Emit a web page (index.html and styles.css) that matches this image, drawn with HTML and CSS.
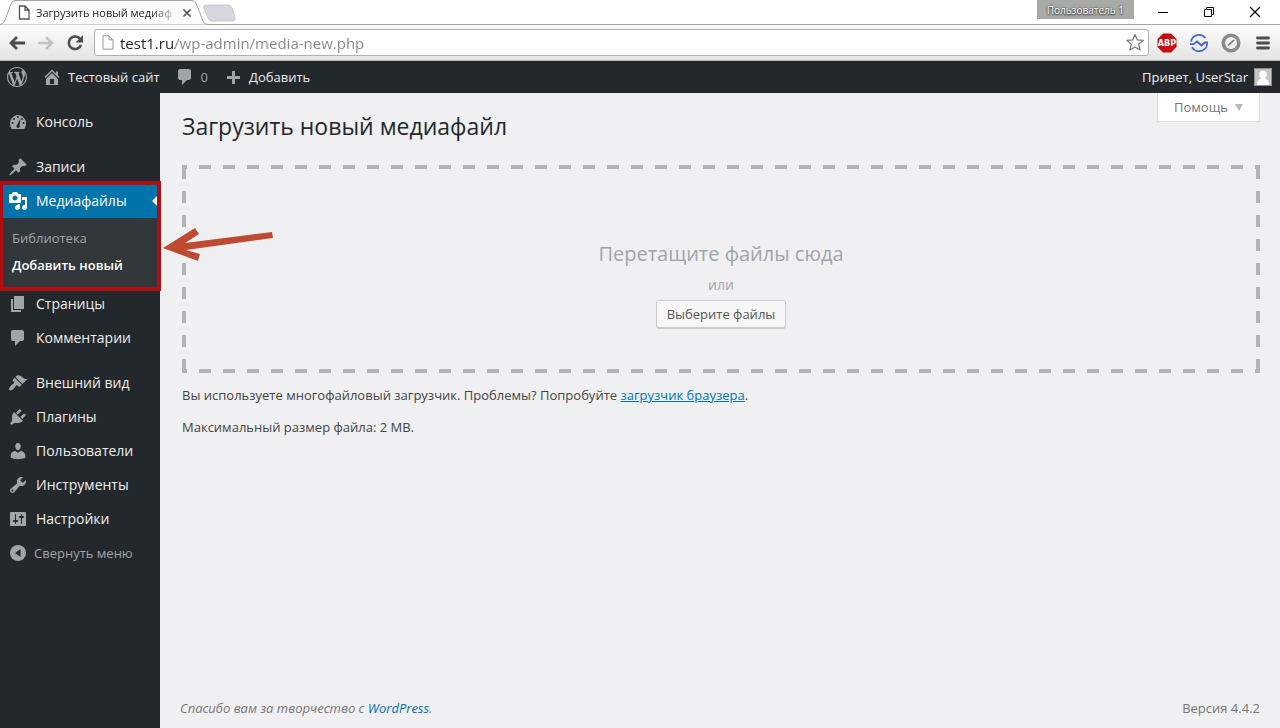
FILE: index.html
```html
<!DOCTYPE html>
<html lang="ru">
<head>
<meta charset="utf-8">
<title>Загрузить новый медиафайл</title>
<link rel="stylesheet" href="styles.css">
</head>
<body>
<div class="window">
  <header class="browser">
    <div class="tabstrip">
      <div class="tab">
        <svg class="tab-shape" width="250" height="25" viewBox="0 0 250 25"><path d="M0 24.500C3 24 4 22 5 20L11 4Q12 .5 15 .5H192Q195 .5 196 3L203 21Q204 24.500 208 24.500" fill="#fcfcfc" stroke="#a5a5a5"/><path d="M205 5h23q3 0 4 3l3 9q1 4-2 4h-21q-3 0-4-3l-4-10q-1-3 1-3z" fill="#d5d8de" stroke="#c6c8cc"/></svg>
        <svg class="page-icon" width="12" height="15" viewBox="0 0 12 15"><path d="M1.500 1h5.500l4 4v9h-9.500zM7 1v4h4" fill="#fff" stroke="#555" stroke-width="1.300"/></svg>
        <span class="tab-title">Загрузить новый медиаф</span>
        <button class="tab-close" aria-label="Закрыть вкладку"><svg width="10" height="10" viewBox="0 0 10 10"><path d="M1.500 1.500l7 7M8.500 1.500l-7 7" stroke="#505050" stroke-width="1.600"/></svg></button>
      </div>
      <div class="window-tools">
        <button class="profile">Пользователь 1</button>
        <button class="win" aria-label="Свернуть"><svg width="12" height="12" viewBox="0 0 12 12"><path d="M1 6.500h10" stroke="#000"/></svg></button>
        <button class="win" aria-label="Развернуть"><svg width="12" height="12" viewBox="0 0 12 12"><path d="M1.500 3.500h7v7h-7zM3.500 3V1.500h7v7H9" fill="none" stroke="#000"/></svg></button>
        <button class="win" aria-label="Закрыть"><svg width="12" height="12" viewBox="0 0 12 12"><path d="M1 1l10 10M11 1L1 11" stroke="#000" stroke-width="1.200"/></svg></button>
      </div>
    </div>
    <div class="toolbar">
      <button class="nav" aria-label="Назад"><svg width="18" height="16" viewBox="0 0 18 16"><path d="M17 8H4M9 2L3 8l6 6" fill="none" stroke="#4d4d4d" stroke-width="2.800"/></svg></button>
      <button class="nav" aria-label="Вперёд"><svg width="18" height="16" viewBox="0 0 18 16"><path d="M1 8h13M9 2l6 6-6 6" fill="none" stroke="#c4c4c4" stroke-width="2.600"/></svg></button>
      <button class="nav" aria-label="Обновить"><svg width="18" height="18" viewBox="0 0 18 18"><path d="M14.200 5A6.300 6.300 0 1 0 15 11" fill="none" stroke="#4d4d4d" stroke-width="2.600"/><path d="M17 1v7.500h-7.500z" fill="#4d4d4d"/></svg></button>
      <div class="omnibox">
        <svg width="12" height="15" viewBox="0 0 12 15"><path d="M1 .8h6l4 4v9.400H1zM7 .8v4h4" fill="#fbfbfb" stroke="#999"/></svg>
        <input class="url" type="text" aria-label="Адрес" value="test1.ru/wp-admin/media-new.php">
        <button class="star" aria-label="Добавить в закладки"><svg width="20" height="19" viewBox="0 0 20 19"><path d="M10 1.500l2.300 5.400 5.900.5-4.500 3.900 1.400 5.700L10 14l-5.100 3 1.400-5.700L1.800 7.400l5.900-.5z" fill="#fff" stroke="#777" stroke-width="1.200" stroke-linejoin="round"/></svg></button>
      </div>
      <div class="extensions">
        <button class="nav" aria-label="Adblock Plus"><svg width="20" height="20" viewBox="0 0 20 20"><path d="M6 .5h8L19.500 6v8L14 19.500H6L.5 14V6z" fill="#c70d12"/><text class="abp" x="10" y="13" text-anchor="middle">ABP</text></svg></button>
        <button class="nav" aria-label="Расширение"><svg width="20" height="20" viewBox="0 0 20 20" fill="none" stroke="#4467c9" stroke-width="1.800"><path d="M2 8.500A8.200 8.200 0 0 1 16.500 5M3 14.200A8.200 8.200 0 0 0 18.200 9.500"/><path d="M1 11.200h3.500L8 8.500l4.500 4 3.500-3h3"/></svg></button>
        <button class="nav" aria-label="Компас"><svg width="20" height="20" viewBox="0 0 20 20"><circle cx="10" cy="10" r="9.500" fill="#8a8a8a"/><circle cx="10" cy="10" r="6" fill="#f1f1f1"/><path d="M6.500 13.500l1-2.500 5-4.500L14 7l-4.500 4.500z" fill="#777"/></svg></button>
        <button class="nav" aria-label="Меню браузера"><svg width="14" height="14" viewBox="0 0 14 14"><path d="M1.500 2h11M1.500 7h11M1.500 12h11" stroke="#4d4d4d" stroke-width="2.800" stroke-linecap="round"/></svg></button>
      </div>
    </div>
  </header>

  <nav class="adminbar" aria-label="Панель">
    <a href="#" aria-label="О WordPress"><svg class="ico" viewBox="0 0 20 20"><path d="M20 10c0-5.510-4.490-10-10-10C4.480 0 0 4.490 0 10c0 5.520 4.480 10 10 10 5.510 0 10-4.480 10-10zM7.780 15.370L4.370 6.220c.55-.02 1.170-.08 1.170-.08.5-.06.44-1.130-.06-1.110 0 0-1.450.11-2.370.11-.18 0-.37 0-.58-.01C4.120 2.690 6.870 1.110 10 1.110c2.330 0 4.450.87 6.050 2.340-.68-.11-1.650.39-1.650 1.580 0 .74.45 1.360.9 2.100.35.61.55 1.360.55 2.460 0 1.490-1.400 5-1.400 5l-3.030-8.370c.54-.02.82-.17.82-.17.5-.05.44-1.250-.06-1.220 0 0-1.440.12-2.380.12-.87 0-2.330-.12-2.330-.12-.5-.03-.56 1.200-.06 1.220l.92.08 1.260 3.410zM17.410 10c.24-.64.74-1.870.43-4.250.7 1.290 1.050 2.710 1.050 4.250 0 3.290-1.730 6.240-4.400 7.780.97-2.590 1.940-5.200 2.920-7.780zM6.100 18.090C3.120 16.650 1.110 13.530 1.110 10c0-1.300.23-2.480.72-3.590C3.250 10.300 4.670 14.200 6.100 18.090zm4.030-6.630l2.580 6.980c-.86.29-1.760.45-2.710.45-.79 0-1.570-.11-2.290-.33.81-2.380 1.620-4.740 2.420-7.100z"/></svg></a>
    <a href="#"><svg class="ico" viewBox="0 0 20 20"><path d="M16 8.500l1.530 1.530-1.060 1.060L10 4.600l-6.470 6.490-1.060-1.060L10 2.500l4 4v-2h2v4zm-6-2.460l6 5.990V18H4v-5.970zM12 17v-5H8v5h4z"/></svg>Тестовый сайт</a>
    <a href="#" class="muted"><svg class="ico" viewBox="0 0 20 20"><path d="M5 2h9c1.100 0 2 .9 2 2v7c0 1.100-.9 2-2 2h-2l-5 5v-5H5c-1.100 0-2-.9-2-2V4c0-1.100.9-2 2-2z"/></svg>0</a>
    <a href="#"><svg class="ico" viewBox="0 0 20 20"><path d="M17 9v3h-5v5H9v-5H4V9h5V4h3v5z"/></svg>Добавить</a>
    <a href="#" class="account">Привет, UserStar<svg width="18" height="18" viewBox="0 0 18 18"><path d="M0 0h18v18H0z" fill="#c5c5c5"/><path d="M.5.5h17v17H.5z" fill="none" stroke="#8c8f92"/><circle cx="9" cy="6.500" r="3.800" fill="#fff"/><path d="M3 17c0-5 3-7 6-7s6 2 6 7z" fill="#fff"/></svg></a>
  </nav>

  <div class="page">
    <nav class="sidebar" aria-label="Главное меню">
      <ul class="menu">
        <li><a href="#"><svg class="ico" viewBox="0 0 20 20"><path d="M3.760 17h12.480c1.340-1.630 1.760-3.690 1.760-5.710C18 7.280 14.410 3 10 3s-8 4.280-8 8.290c0 2.020.42 4.080 1.760 5.710z"/><g class="cut"><circle cx="10" cy="5" r="1"/><circle cx="6" cy="7" r="1"/><circle cx="14" cy="7" r="1"/><circle cx="4.500" cy="11" r="1"/><circle cx="15.500" cy="11" r="1"/><path d="M12.500 6.500l-.8 7a1.700 1.700 0 1 1-2.500-.8z"/></g></svg>Консоль</a></li>
        <li class="gap"><a href="#"><svg class="ico" viewBox="0 0 20 20"><path d="M10.440 3.020l1.820-1.820 6.360 6.350-1.830 1.820c-1.050-.68-2.480-.57-3.410.36l-.75.75c-.92.93-1.040 2.350-.35 3.410l-1.830 1.820-2.410-2.410-2.800 2.790c-.42.42-3.380 2.710-3.800 2.290s1.860-3.390 2.280-3.810l2.790-2.790L4.100 9.360l1.830-1.820c1.050.69 2.480.57 3.400-.36l.75-.75c.93-.92 1.050-2.350.36-3.410z"/></svg>Записи</a></li>
        <li class="current">
          <a href="#"><svg class="ico" viewBox="0 0 20 20"><path fill-rule="evenodd" d="M13 11V4c0-.55-.45-1-1-1h-1.670L9 1H5L3.670 3H2c-.55 0-1 .45-1 1v7c0 .55.45 1 1 1h10c.55 0 1-.45 1-1zM7 4.500c1.380 0 2.500 1.120 2.500 2.500S8.380 9.500 7 9.500 4.500 8.380 4.500 7 5.620 4.500 7 4.500zM14 6h5v10.500c0 1.380-1.120 2.500-2.500 2.500S14 17.880 14 16.500s1.120-2.500 2.500-2.500c.17 0 .34.02.5.05V9h-3V6zm-4 8.050V13h2v3.500c0 1.380-1.120 2.500-2.500 2.500S7 17.880 7 16.500 8.120 14 9.500 14c.17 0 .34.02.5.05z"/></svg>Медиафайлы<span class="notch"></span></a>
          <ul class="submenu">
            <li><a href="#">Библиотека</a></li>
            <li><a href="#" class="active">Добавить новый</a></li>
          </ul>
          <div class="frame"></div>
          <svg class="pointer" width="114" height="36" viewBox="0 0 114 36"><path d="M0 20L32 0l4 6-14 9L109 4l1 6-87 12 14 4-2 7z" fill="#be4a31"/></svg>
        </li>
        <li><a href="#"><svg class="ico" viewBox="0 0 20 20"><path d="M6 15V2h10v13H6zm-1 1h8v2H3V5h2v11z"/></svg>Страницы</a></li>
        <li><a href="#"><svg class="ico" viewBox="0 0 20 20"><path d="M5 2h9c1.100 0 2 .9 2 2v7c0 1.100-.9 2-2 2h-2l-5 5v-5H5c-1.100 0-2-.9-2-2V4c0-1.100.9-2 2-2z"/></svg>Комментарии</a></li>
        <li class="gap"><a href="#"><svg class="ico" viewBox="0 0 20 20"><path d="M14.480 11.060L7.410 3.990l1.500-1.500c.5-.56 2.300-.47 3.510.32 1.210.8 1.430 1.280 2.910 2.100 1.180.64 2.450 1.260 4.450.85zm-.71.71L6.700 4.700 4.930 6.470c-.39.39-.39 1.020 0 1.410l1.060 1.060c.39.39.39 1.030 0 1.420-.6.6-1.430 1.110-2.210 1.690-.35.26-.7.53-1.010.84C1.430 14.230.4 16.080 1.400 17.070c.99 1 2.840-.03 4.180-1.360.31-.31.58-.66.85-1.020.57-.78 1.080-1.610 1.690-2.210.39-.39 1.020-.39 1.410 0l1.060 1.060c.39.39 1.020.39 1.410 0z"/></svg>Внешний вид</a></li>
        <li><a href="#"><svg class="ico" viewBox="0 0 20 20"><path d="M13.110 4.360L9.870 7.600 8 5.730l3.240-3.240c.35-.34 1.050-.2 1.560.32.52.51.66 1.210.31 1.550zm-8 1.770l.91-1.120 9.010 9.010-1.190.84c-.71.71-2.630 1.160-3.820 1.160H6.140L4.900 17.260c-.59.59-1.540.59-2.120 0-.59-.58-.59-1.530 0-2.120l1.240-1.240v-3.880c0-1.130.4-3.190 1.090-3.890zm7.260 3.970l3.240-3.240c.34-.35 1.040-.21 1.550.31.52.51.66 1.210.31 1.550l-3.240 3.250z"/></svg>Плагины</a></li>
        <li><a href="#"><svg class="ico" viewBox="0 0 20 20"><path d="M10 9.250c-2.270 0-2.730-3.440-2.730-3.440C7 4.020 7.820 2 9.970 2c2.160 0 2.980 2.020 2.710 3.810 0 0-.41 3.440-2.680 3.440zm0 2.570L12.720 10c2.390 0 4.520 2.330 4.520 4.530v2.490s-3.650 1.130-7.240 1.130c-3.650 0-7.240-1.130-7.240-1.130v-2.490c0-2.250 1.940-4.480 4.470-4.480z"/></svg>Пользователи</a></li>
        <li><a href="#"><svg class="ico" viewBox="0 0 20 20"><path fill-rule="evenodd" d="M16.680 9.770c-1.340 1.340-3.300 1.670-4.950.99l-5.410 6.520c-.99.99-2.590.99-3.580 0s-.99-2.590 0-3.570l6.520-5.420c-.68-1.650-.35-3.610.99-4.950 1.280-1.280 3.120-1.620 4.720-1.060l-2.890 2.890 2.820 2.820 2.860-2.870c.53 1.580.18 3.390-1.080 4.650zM3.810 16.210c.4.39 1.040.39 1.430 0 .4-.4.4-1.040 0-1.430-.39-.4-1.030-.4-1.430 0-.39.39-.39 1.030 0 1.430z"/></svg>Инструменты</a></li>
        <li><a href="#"><svg class="ico" viewBox="0 0 20 20"><path fill-rule="evenodd" d="M18 16V4c0-.55-.45-1-1-1H3c-.55 0-1 .45-1 1v12c0 .55.45 1 1 1h14c.55 0 1-.45 1-1zM8 11h1c.55 0 1 .45 1 1s-.45 1-1 1H8v1.500c0 .28-.22.5-.5.5s-.5-.22-.5-.5V13H6c-.55 0-1-.45-1-1s.45-1 1-1h1V5.500c0-.28.22-.5.5-.5s.5.22.5.5V11zm5-2h-1c-.55 0-1-.45-1-1s.45-1 1-1h1V5.500c0-.28.22-.5.5-.5s.5.22.5.5V7h1c.55 0 1 .45 1 1s-.45 1-1 1h-1v5.500c0 .28-.22.5-.5.5s-.5-.22-.5-.5V9z"/></svg>Настройки</a></li>
        <li><button class="collapse"><svg class="ico" viewBox="0 0 20 20"><circle cx="10" cy="10" r="8"/><path class="cut" d="M12.500 6v8L7 10z"/></svg>Свернуть меню</button></li>
      </ul>
    </nav>

    <div class="content">
      <main>
        <div class="heading">
          <h1>Загрузить новый медиафайл</h1>
          <button class="help">Помощь<svg width="10" height="8" viewBox="0 0 10 8"><path d="M1 1h8L5 8z" fill="#b4b9be"/></svg></button>
        </div>
        <section class="dropzone">
          <p class="drop-title">Перетащите файлы сюда</p>
          <p class="drop-or">или</p>
          <button class="select">Выберите файлы</button>
        </section>
        <p class="note">Вы используете многофайловый загрузчик. Проблемы? Попробуйте <a href="#">загрузчик браузера</a>.</p>
        <p class="note">Максимальный размер файла: 2 MB.</p>
      </main>
      <footer class="footer">
        <em>Спасибо вам за творчество с <a href="#">WordPress</a>.</em>
        <span>Версия 4.4.2</span>
      </footer>
    </div>
  </div>
</div>
</body>
</html>
```

FILE: styles.css
```css
* { box-sizing: border-box; }

body {
  margin: 0;
  background: #f0f0f2;
  color: #444;
  font: 13px/20px "Open Sans", "Noto Sans", sans-serif;
}

button {
  margin: 0;
  padding: 0;
  border: 0;
  background: none;
  color: inherit;
  font: inherit;
}

ul { margin: 0; padding: 0; list-style: none; }
h1, p { margin: 0; }
svg { display: block; flex: none; }
a { color: #0073aa; }

.window {
  display: flex;
  flex-direction: column;
  min-height: 100vh;
}

/* Browser */
.tabstrip {
  display: flex;
  justify-content: space-between;
  height: 25px;
  background: #fff;
  border-bottom: 1px solid #a5a5a5;
}

.tab {
  position: relative;
  display: flex;
  align-items: center;
  width: 210px;
  height: 25px;
  padding-left: 18px;
  color: #222;
  font-size: 11px;
}

.tab-shape { position: absolute; top: 0; left: 0; }
.page-icon, .tab-title, .tab-close { position: relative; }

.tab-title {
  width: 137px;
  margin: 0 9px 0 6px;
  white-space: nowrap;
  mask-image: linear-gradient(90deg, #000 115px, transparent 145px);
}

.window-tools { display: flex; align-items: flex-start; padding-right: 2px; }

.profile {
  height: 19px;
  margin-right: 6px;
  padding: 0 10px;
  background: #a8aaa8;
  color: #fff;
  font-size: 10px;
  line-height: 18px;
  text-shadow: 0 0 2px #333, 0 1px 2px #333;
}

.win {
  display: flex;
  align-items: center;
  justify-content: center;
  width: 46px;
  height: 24px;
}

.toolbar {
  display: flex;
  align-items: center;
  height: 36px;
  padding: 0 10px 0 8px;
  background: linear-gradient(#fcfcfc, #e4e4e4);
  border-bottom: 1px solid #b5b5b5;
}

.toolbar > .nav { width: 18px; margin-right: 11px; }
.toolbar > .nav:nth-child(3) { margin-right: 10px; }

.omnibox {
  display: flex;
  flex: 1;
  align-items: center;
  height: 27px;
  padding: 0 3px 0 7px;
  background: #fff;
  border: 1px solid #b0b0b0;
  border-radius: 3px;
}

.url {
  flex: 1;
  min-width: 0;
  height: 25px;
  margin: 0 6px;
  padding: 0;
  border: 0;
  background: linear-gradient(90deg, #222 55px, #858585 55px);
  background-clip: text;
  color: transparent;
  font: 15px/24px "Open Sans", "Noto Sans", sans-serif;
}

.extensions {
  display: flex;
  align-items: center;
  gap: 12px;
  margin-left: 8px;
}

.extensions .nav:last-child { margin-left: 3px; }

.abp {
  fill: #fff;
  font: bold 9px "Liberation Sans Narrow", "DejaVu Sans Condensed", sans-serif;
}

/* Admin bar */
.adminbar {
  display: flex;
  align-items: center;
  height: 32px;
  padding: 0 8px 0 7px;
  background: #23282d;
}

.adminbar a {
  display: flex;
  align-items: center;
  gap: 6px;
  margin-right: 15px;
  color: #eee;
  text-decoration: none;
}

.adminbar .muted { color: #a0a5aa; }
.adminbar .account { margin: 0 0 0 auto; }

.ico {
  width: 20px;
  height: 20px;
  fill: #a0a5aa;
}

.cut { fill: #23282d; }

/* Side menu */
.page { display: flex; flex: 1; }

.sidebar {
  flex: none;
  width: 160px;
  padding-top: 12px;
  background: #23282d;
}

.gap { margin-top: 11px; }

.menu > li > a, .collapse {
  display: flex;
  align-items: center;
  gap: 8px;
  width: 100%;
  height: 34px;
  padding-left: 8px;
  color: #eee;
  font-size: 14px;
  text-decoration: none;
}

.menu .collapse { gap: 6px; color: #a0a5aa; font-size: 13px; }

.current { position: relative; }
.menu > .current > a { background: #0073aa; color: #fff; }
.current .ico { fill: #fff; }

.notch {
  margin-left: auto;
  border: 8px solid transparent;
  border-left: 0;
  border-right-color: #f1f1f1;
}

.submenu { padding: 7px 0 8px; background: #32373c; }

.submenu a {
  display: block;
  padding: 3px 12px 4px;
  color: #a0a5aa;
  text-decoration: none;
}

.submenu .active { color: #fff; font-weight: 600; }

.frame {
  position: absolute;
  inset: -3px -1px -4px 0;
  border: 4px solid #b00d10;
  border-left-width: 3px;
}

.pointer { position: absolute; top: 44px; left: 163px; }

/* Content */
.content {
  display: flex;
  flex: 1;
  flex-direction: column;
  justify-content: space-between;
  padding: 0 20px 10px;
}

main { padding-left: 2px; }

.heading {
  display: flex;
  align-items: flex-start;
  justify-content: space-between;
  margin-bottom: 24px;
}

h1 {
  padding: 19px 0 0;
  color: #23282d;
  font-size: 23px;
  font-weight: 400;
  line-height: 29px;
}

.help {
  display: flex;
  align-items: center;
  gap: 6px;
  height: 29px;
  padding: 0 15px 0 16px;
  background: #fff;
  border: 1px solid #ddd;
  border-top: 0;
  color: #777;
}

.dropzone {
  --h: repeating-linear-gradient(90deg, #b4b4b4 0 5px, transparent 5px 17px, #b4b4b4 17px 24px);
  --v: repeating-linear-gradient(transparent 0 2px, #b4b4b4 2px 14px, transparent 14px 24px);
  display: flex;
  flex-direction: column;
  align-items: center;
  padding: 75px 0 45px;
  background:
    var(--h) top / 100% 4px no-repeat,
    var(--h) bottom / 100% 4px no-repeat,
    var(--v) left / 4px 100% no-repeat,
    var(--v) right / 4px 100% no-repeat;
}

.drop-title { color: #a0a5aa; font-size: 20px; line-height: 28px; }
.drop-or { margin: 7px 0 5px; color: #a0a5aa; font-size: 14px; }

.select {
  height: 28px;
  padding: 0 10px;
  background: #f7f7f7;
  border: 1px solid #ccc;
  border-radius: 3px;
  box-shadow: 0 1px 0 #ccc;
  color: #555;
}

.note { margin-top: 12px; }

.footer {
  display: flex;
  justify-content: space-between;
  color: #777;
}

.footer a { text-decoration: none; }
```
